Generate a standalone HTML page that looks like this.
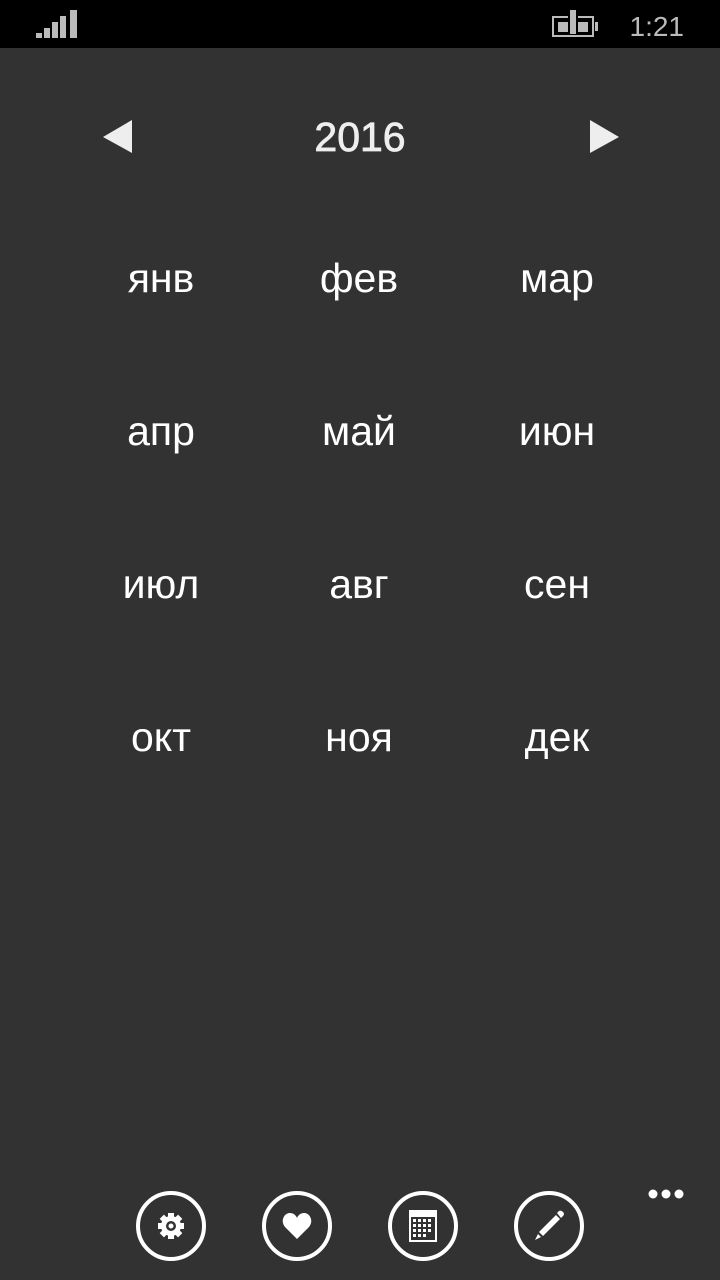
<!DOCTYPE html>
<html><head><meta charset="utf-8"><style>
body{margin:0;width:720px;height:1280px;background:#323232;overflow:hidden;font-family:"Liberation Sans","DejaVu Sans",sans-serif;position:relative;color:#fff}
.sb{position:absolute;top:0;left:0;width:720px;height:48px;background:#000}
.m{position:absolute;width:180px;text-align:center;font-size:41px;line-height:40px}
.c{position:absolute;top:1191px;width:62px;height:62px;border:4px solid #fff;border-radius:50%}
.c svg{position:absolute;left:50%;top:50%;transform:translate(-50%,-50%)}
</style></head><body>
<div class="sb">
<svg width="720" height="48" style="position:absolute;left:0;top:0">
<rect x="36" y="33" width="6" height="5" fill="#bbb"/><rect x="44" y="28" width="6" height="10" fill="#bbb"/><rect x="52" y="22" width="6" height="16" fill="#bbb"/><rect x="60" y="16" width="6" height="22" fill="#bbb"/><rect x="70" y="10" width="7" height="28" fill="#bbb"/>
<rect x="553" y="17" width="40" height="19" fill="none" stroke="#bbb" stroke-width="2"/><rect x="595" y="22" width="3" height="9" fill="#bbb"/>
<rect x="558" y="22" width="30" height="10" fill="#bbb"/><rect x="568" y="12" width="10" height="22" fill="#000"/><rect x="570" y="10" width="6" height="24" fill="#bbb"/>
<text x="684" y="36" text-anchor="end" font-family="Liberation Sans" font-size="28" fill="#bbb">1:21</text>
</svg></div>
<svg width="720" height="200" style="position:absolute;left:0;top:0">
<polygon points="132,120 132,153 103,137" fill="#eee"/>
<polygon points="590,120 590,153 619,137" fill="#eee"/>
<text x="360" y="151" text-anchor="middle" font-size="41" fill="#eee" font-family="Liberation Sans" stroke="#eee" stroke-width="0.8">2016</text>
</svg>
<div class="m" style="left:71px;top:258px">янв</div><div class="m" style="left:269px;top:258px">фев</div><div class="m" style="left:467px;top:258px">мар</div>
<div class="m" style="left:71px;top:411px">апр</div><div class="m" style="left:269px;top:411px">май</div><div class="m" style="left:467px;top:411px">июн</div>
<div class="m" style="left:71px;top:564px">июл</div><div class="m" style="left:269px;top:564px">авг</div><div class="m" style="left:467px;top:564px">сен</div>
<div class="m" style="left:71px;top:717px">окт</div><div class="m" style="left:269px;top:717px">ноя</div><div class="m" style="left:467px;top:717px">дек</div>
<div class="c" style="left:136px"><svg width="32" height="32" viewBox="0 0 32 32"><g fill="#fff"><circle cx="16" cy="16" r="10"/><g id="t"><rect x="13" y="3" width="6" height="6"/><rect x="13" y="23" width="6" height="6"/><rect x="3" y="13" width="6" height="6"/><rect x="23" y="13" width="6" height="6"/></g><use href="#t" transform="rotate(45 16 16)"/></g><circle cx="16" cy="16" r="5" fill="#323232"/><circle cx="16" cy="16" r="2.5" fill="#fff"/></svg></div>
<div class="c" style="left:262px"><svg width="32" height="30" viewBox="0 0 32 30"><path d="M16 28 L4 16 C-1 10 3 2 9 2 C12 2 15 4 16 7 C17 4 20 2 23 2 C29 2 33 10 28 16 Z" fill="#fff"/></svg></div>
<div class="c" style="left:388px"><svg width="32" height="34" viewBox="0 0 32 34"><rect x="2" y="1" width="28" height="32" fill="#fff"/><rect x="4" y="8" width="24" height="23" fill="#323232"/><g fill="#fff"><rect x="6" y="10" width="3" height="3"/><rect x="11" y="10" width="3" height="3"/><rect x="16" y="10" width="3" height="3"/><rect x="21" y="10" width="3" height="3"/><rect x="6" y="15" width="3" height="3"/><rect x="11" y="15" width="3" height="3"/><rect x="16" y="15" width="3" height="3"/><rect x="21" y="15" width="3" height="3"/><rect x="6" y="20" width="3" height="3"/><rect x="11" y="20" width="3" height="3"/><rect x="16" y="20" width="3" height="3"/><rect x="21" y="20" width="3" height="3"/><rect x="6" y="25" width="3" height="3"/><rect x="11" y="25" width="3" height="3"/><rect x="16" y="25" width="3" height="3"/></g></svg></div>
<div class="c" style="left:514px"><svg width="34" height="34" viewBox="0 0 34 34"><path d="M7 23 L24 6 L28 10 L11 27 Z" fill="#fff"/><path d="M25 4 L27 2 Q29 1 31 3 Q33 5 31 7 L29 9 Z" fill="#fff"/><path d="M6 25 L9 28 L3 31 Z" fill="#fff"/></svg></div>
<svg width="50" height="14" style="position:absolute;left:642px;top:1187px"><circle cx="11" cy="7" r="4.5" fill="#fff"/><circle cx="24" cy="7" r="4.5" fill="#fff"/><circle cx="37" cy="7" r="4.5" fill="#fff"/></svg>
</body></html>
